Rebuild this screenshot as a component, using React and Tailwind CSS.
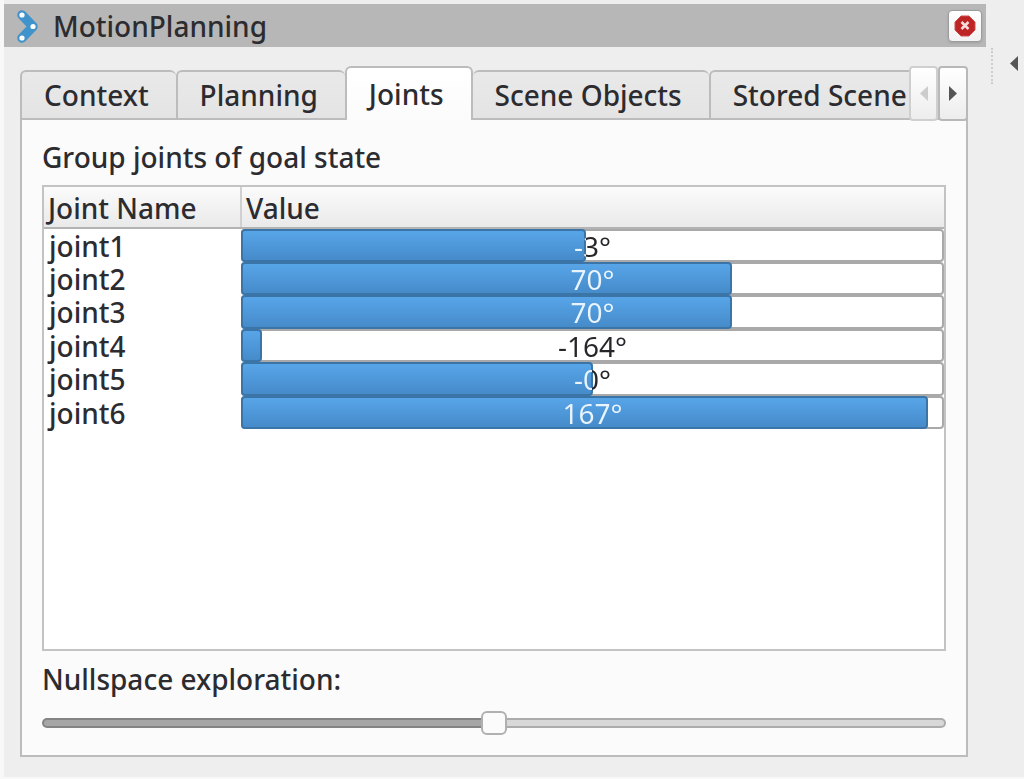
import React, { useState } from 'react';

const TABS = ['Context', 'Planning', 'Joints', 'Scene Objects', 'Stored Scene'];

const JOINTS = [
  { name: 'joint1', value: -3, percent: 49.1 },
  { name: 'joint2', value: 70, percent: 69.8 },
  { name: 'joint3', value: 70, percent: 69.8 },
  { name: 'joint4', value: -164, percent: 3 },
  { name: 'joint5', value: -0, percent: 50 },
  { name: 'joint6', value: 167, percent: 97.7 },
];

// keeps the sign of a rounded negative zero
const formatDegrees = (value) => `${Object.is(value, -0) ? '-0' : value}°`;

function PanelIcon() {
  return (
    <svg width="22" height="34" viewBox="0 0 22 34" aria-hidden="true">
      <path d="M5 6 L16 17.500 L5 29" fill="none" stroke="#4094cb" strokeWidth="9.500" strokeLinecap="round" strokeLinejoin="round" />
      <circle cx="5" cy="6" r="2.600" fill="#fff" />
      <circle cx="16" cy="17.500" r="2.600" fill="#fff" />
      <circle cx="5" cy="29" r="2.600" fill="#fff" />
    </svg>
  );
}

function CloseIcon() {
  return (
    <svg width="22" height="22" viewBox="0 0 22 22" aria-hidden="true">
      <path d="M7 1 H15 L21 7 V15 L15 21 H7 L1 15 V7 Z" fill="#bd2424" stroke="#d04c4c" strokeWidth="1" />
      <path d="M7.500 7 L14.500 14 M14.500 7 L7.500 14" stroke="#f6dcdc" strokeWidth="2.500" />
    </svg>
  );
}

function Arrow({ left, color }) {
  return (
    <svg width="8" height="15" viewBox="0 0 8 15" aria-hidden="true">
      <path d={left ? 'M8 0 V15 L0 7.500 Z' : 'M0 0 V15 L8 7.500 Z'} fill={color} />
    </svg>
  );
}

function TitleBar() {
  return (
    <header className="flex h-[43px] items-center gap-[14px] bg-[#b7b7b7] pr-1 pl-[13px]">
      <PanelIcon />
      <h1 className="flex-1">MotionPlanning</h1>
      <button
        type="button"
        aria-label="Close"
        className="flex h-8 w-[34px] items-center justify-center rounded border border-[#9c9c9c] bg-gradient-to-b from-white to-[#f2f2f2] shadow-sm"
      >
        <CloseIcon />
      </button>
    </header>
  );
}

function TabBar({ active, onSelect }) {
  return (
    <div className="flex h-[55px]">
      <div role="tablist" className="flex h-[54px] min-w-0 flex-1 items-end overflow-hidden">
        {TABS.map((tab) => (
          <button
            key={tab}
            type="button"
            role="tab"
            aria-selected={tab === active}
            onClick={() => onSelect(tab)}
            className={
              tab === active
                ? 'h-[54px] shrink-0 rounded-t-md border-2 border-b-0 border-[#bcbcbc] bg-gradient-to-b from-white to-[#fbfbfb] pr-[27px] pl-[22px]'
                : 'h-[50px] shrink-0 rounded-t-md border-2 border-r-0 border-[#bcbcbc] bg-gradient-to-b from-[#e9e9e9] to-[#e4e4e4] pr-[27px] pl-[22px] [[aria-selected=true]+&]:border-l-0'
            }
          >
            {tab}
          </button>
        ))}
      </div>
      <button
        type="button"
        aria-label="Scroll tabs left"
        disabled
        className="flex w-[29px] items-center justify-center rounded border-2 border-[#cfcfcf] bg-gradient-to-b from-white to-[#ededed]"
      >
        <Arrow left color="#cccccc" />
      </button>
      <button
        type="button"
        aria-label="Scroll tabs right"
        className="flex w-[30px] items-center justify-center rounded border-2 border-[#b8b8b8] bg-gradient-to-b from-white to-[#ededed]"
      >
        <Arrow color="#555555" />
      </button>
    </div>
  );
}

function JointBar({ value, percent }) {
  return (
    <div
      role="progressbar"
      aria-valuenow={percent}
      className="relative h-full rounded border-2 border-[#a9a9a9] bg-white"
    >
      <div className="absolute -inset-0.5">
        <div
          className="h-full rounded border-2 border-[#3b75a8] bg-gradient-to-b from-[#57a5e8] to-[#468bca]"
          style={{ width: `${percent}%` }}
        />
      </div>
      {/* the label turns white where it lies over the filled part */}
      <span
        className="absolute -inset-0.5 flex items-center justify-center bg-clip-text leading-none font-normal text-transparent"
        style={{ backgroundImage: `linear-gradient(to right, #eaf4fd ${percent}%, #26262a ${percent}%)` }}
      >
        {formatDegrees(value)}
      </span>
    </div>
  );
}

function JointTable() {
  return (
    <div className="flex-1 border-2 border-[#c3c3c3] bg-white">
      <table className="w-full table-fixed border-collapse text-left">
        <thead>
          <tr className="h-[41px] bg-gradient-to-b from-[#fbfbfb] to-[#e9e9e9]">
            <th className="w-[197px] border-r-2 border-b-2 border-r-[#d0d0d0] border-b-[#b3b3b3] pt-0.5 pr-0 pb-0 pl-1 leading-8 font-medium">
              Joint Name
            </th>
            <th className="border-b-2 border-[#b3b3b3] pt-0.5 pr-0 pb-0 pl-1 leading-8 font-medium">Value</th>
          </tr>
        </thead>
        <tbody>
          {JOINTS.map((joint) => (
            <tr key={joint.name} className="odd:h-[34px] even:h-[33px]">
              <td className="p-0 pl-[5px] leading-8">{joint.name}</td>
              <td className="h-px p-0">
                <JointBar value={joint.value} percent={joint.percent} />
              </td>
            </tr>
          ))}
        </tbody>
      </table>
    </div>
  );
}

export default function App() {
  const [activeTab, setActiveTab] = useState('Joints');
  const [nullspace, setNullspace] = useState(50);

  return (
    <div className="flex min-h-screen bg-[#f8f8f8] pb-0.5 pl-1 font-['Noto_Sans',sans-serif] text-[28px] leading-8 font-medium text-[#2c2c30]">
      <div className="flex min-w-0 flex-1 bg-[#eeeeee] pt-1">
        <main className="flex min-w-0 flex-1 flex-col">
          <TitleBar />
          <section className="mt-[19px] mr-[18px] mb-5 ml-4 flex flex-1 flex-col">
            <div className="relative z-10 -mb-[3px]">
              <TabBar active={activeTab} onSelect={setActiveTab} />
            </div>
            <div className="flex flex-1 flex-col border-2 border-[#bcbcbc] bg-[#fbfbfb] px-5 pb-5">
              <h2 className="mt-[21px] mb-3">Group joints of goal state</h2>
              <JointTable />
              <label htmlFor="nullspace" className="mt-3">
                Nullspace exploration:
              </label>
              <input
                id="nullspace"
                type="range"
                min="0"
                max="100"
                value={nullspace}
                onChange={(e) => setNullspace(Number(e.target.value))}
                className="mt-4 h-6 w-full appearance-none bg-transparent [&::-webkit-slider-runnable-track]:h-[10px] [&::-webkit-slider-runnable-track]:rounded-full [&::-webkit-slider-runnable-track]:border-2 [&::-webkit-slider-runnable-track]:border-black/20 [&::-webkit-slider-runnable-track]:bg-[image:var(--track)] [&::-webkit-slider-runnable-track]:bg-origin-border [&::-webkit-slider-thumb]:-mt-[9px] [&::-webkit-slider-thumb]:h-6 [&::-webkit-slider-thumb]:w-[26px] [&::-webkit-slider-thumb]:appearance-none [&::-webkit-slider-thumb]:rounded-md [&::-webkit-slider-thumb]:border-2 [&::-webkit-slider-thumb]:border-[#b0b0b0] [&::-webkit-slider-thumb]:bg-[#fbfbfb]"
                style={{ '--track': `linear-gradient(to right, #a6a6a6 ${nullspace}%, #d8d8d8 ${nullspace}%)` }}
              />
            </div>
          </section>
        </main>

        {/* collapse handle of the neighbouring dock */}
        <aside className="flex w-[38px] items-start justify-between pt-11 pr-[6px] pl-[5px]">
          <div className="h-9 border-l-2 border-dotted border-[#cccccc]" />
          <button type="button" aria-label="Expand" className="mt-2 flex">
            <Arrow left color="#555555" />
          </button>
        </aside>
      </div>
    </div>
  );
}
